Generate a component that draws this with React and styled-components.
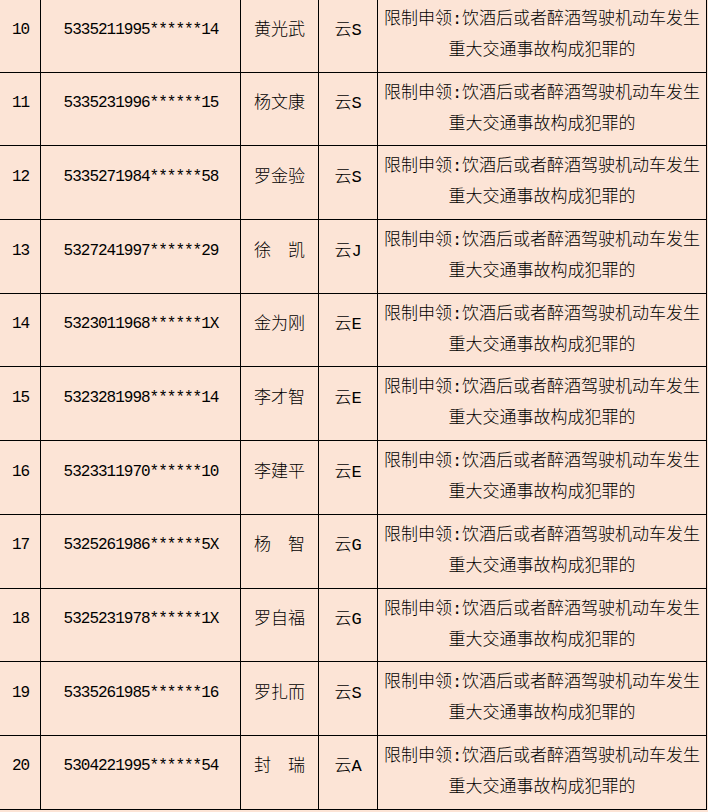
import React from "react"
import styled, { createGlobalStyle } from "styled-components"

const GlobalStyle = createGlobalStyle`
  html, body {
    margin: 0;
    padding: 0;
    background: #fce4d6;
    overflow: hidden;
  }
  body {
    font-family: "Liberation Mono", "Noto Sans CJK SC", monospace;
    font-weight: 300;
    color: #000;
  }
`

const COLS = "41px 200px 78px 59px 329px"

const Table = styled.div`
  display: flex;
  flex-direction: column;
  width: 708px;
  margin: -2px 0 0 -1px;
  border-top: 1px solid #000;
  border-left: 1px solid #000;
`

const Row = styled.div`
  display: grid;
  grid-template-columns: ${COLS};
  height: 73.7px;
`

const Cell = styled.div`
  box-sizing: border-box;
  display: flex;
  justify-content: center;
  align-items: flex-start;
  padding-top: 15.5px;
  border-right: 1px solid #000;
  border-bottom: 1px solid #000;
  font-size: 17px;
  line-height: 31px;
  white-space: nowrap;
`

const NumCell = styled(Cell)`
  font-size: 16px;
  letter-spacing: -1px;
  text-indent: 1px;
`

const Reason = styled(Cell)`
  display: block;
  text-align: center;
  white-space: normal;
  padding-top: 5px;
`

const rows = [
  ["10", "5335211995******14", "黄光武", "云S"],
  ["11", "5335231996******15", "杨文康", "云S"],
  ["12", "5335271984******58", "罗金验", "云S"],
  ["13", "5327241997******29", "徐\u3000凯", "云J"],
  ["14", "5323011968******1X", "金为刚", "云E"],
  ["15", "5323281998******14", "李才智", "云E"],
  ["16", "5323311970******10", "李建平", "云E"],
  ["17", "5325261986******5X", "杨\u3000智", "云G"],
  ["18", "5325231978******1X", "罗自福", "云G"],
  ["19", "5335261985******16", "罗扎而", "云S"],
  ["20", "5304221995******54", "封\u3000瑞", "云A"],
]

const REASON = "限制申领:饮酒后或者醉酒驾驶机动车发生重大交通事故构成犯罪的"

export default function App() {
  return (
    <>
      <GlobalStyle />
      <Table>
        {rows.map(([no, id, name, plate]) => (
          <Row key={no}>
            <NumCell>{no}</NumCell>
            <NumCell>{id}</NumCell>
            <Cell>{name}</Cell>
            <Cell>{plate}</Cell>
            <Reason>{REASON}</Reason>
          </Row>
        ))}
      </Table>
    </>
  )
}
